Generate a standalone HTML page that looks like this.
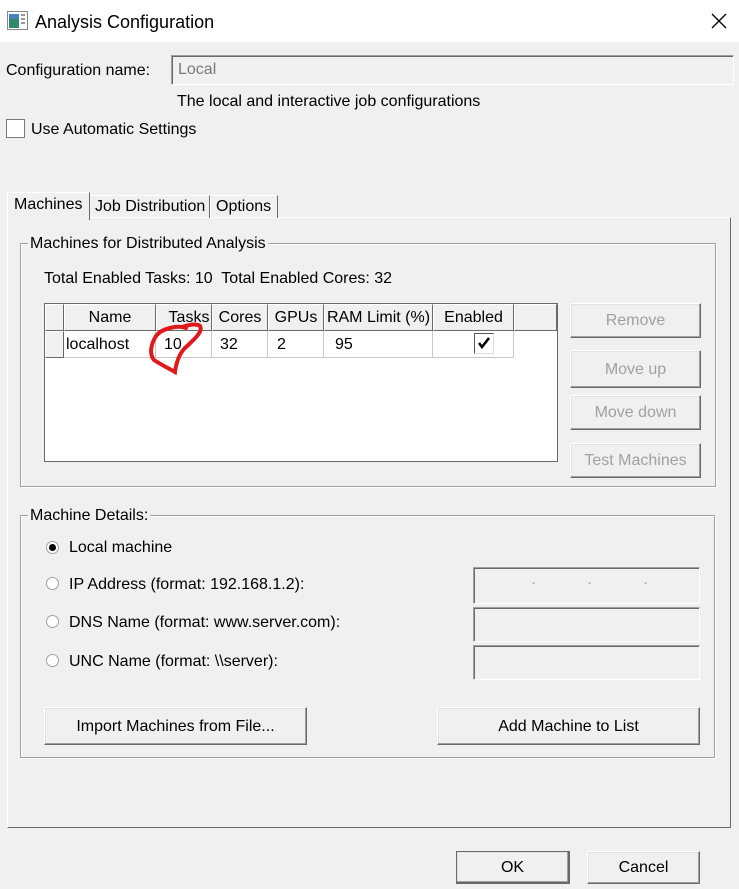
<!DOCTYPE html>
<html><head><style>
*{margin:0;padding:0;box-sizing:border-box}
body{width:739px;height:889px;background:#f0f0f0;font-family:"Liberation Sans",sans-serif;font-size:16px;color:#000;position:relative;overflow:hidden}
.a{position:absolute;white-space:nowrap}
.btn{position:absolute;background:#f0f0f0;border:1px solid;border-color:#fff #696969 #696969 #fff;box-shadow:inset -1px -1px 0 #a0a0a0,inset 1px 1px 0 #e3e3e3;text-align:center;display:flex;align-items:center;justify-content:center;padding-top:1px}
.dis{color:#a0a0a0}
.sunk{position:absolute;border:1px solid;border-color:#a0a0a0 #fff #fff #a0a0a0;box-shadow:inset 1px 1px 0 #696969}
.grp{position:absolute;border:1px solid #a0a0a0;box-shadow:1px 1px 0 #fff inset,1px 1px 0 #fff}
.leg{position:absolute;background:#f0f0f0;padding:0 2px}
.radio{position:absolute;width:13px;height:13px;border-radius:50%;background:#fff;border:1px solid #a0a0a0}
.c{position:absolute;border-right:1px solid #c8c8c8;border-bottom:1px solid #c8c8c8;height:27px;line-height:27px;padding-left:3px}
.h{position:absolute;background:#f0f0f0;border:1px solid;border-color:#fff #696969 #696969 #fff;height:27px;line-height:26px;text-align:center}
</style></head><body>
<div class="a" style="left:0;top:0;width:739px;height:42px;background:#fff"></div>
<svg class="a" style="left:7px;top:11px" width="22" height="20"><rect x="0.5" y="0.5" width="20" height="18" fill="#fff" stroke="#888"/><rect x="2" y="3" width="10" height="14" fill="#2e8a6a"/><rect x="2" y="3" width="10" height="5" fill="#4a7fc0"/><rect x="14" y="3" width="4" height="2" fill="#999"/><rect x="14" y="7" width="4" height="2" fill="#999"/><rect x="14" y="11" width="4" height="2" fill="#999"/></svg>
<div class="a" style="left:35px;top:12px;font-size:18px">Analysis Configuration</div>
<svg class="a" style="left:711px;top:13px" width="16" height="16"><path d="M1 1L15 15M15 1L1 15" stroke="#000" stroke-width="1.3"/></svg>

<div class="a" style="left:6px;top:62px">Configuration name:</div>
<div class="sunk" style="left:171px;top:55px;width:563px;height:30px;background:#f0f0f0"><span class="a" style="left:6px;top:5px;color:#7a7a7a">Local</span></div>
<div class="a" style="left:177px;top:93px">The local and interactive job configurations</div>
<div class="a" style="left:6px;top:119px;width:19px;height:19px;background:#fff;border:1px solid #777"></div>
<div class="a" style="left:31px;top:121px">Use Automatic Settings</div>

<div class="a" style="left:7px;top:217px;width:724px;height:611px;border:1px solid;border-color:#fff #696969 #696969 #fff"></div>
<div class="a" style="left:89px;top:195px;width:121px;height:23px;border:1px solid;border-color:#fff #696969 transparent #fff;border-bottom:none"></div>
<div class="a" style="left:95px;top:198px">Job Distribution</div>
<div class="a" style="left:210px;top:195px;width:68px;height:23px;border:1px solid;border-color:#fff #696969 transparent #fff;border-bottom:none"></div>
<div class="a" style="left:216px;top:198px">Options</div>
<div class="a" style="left:7px;top:192px;width:83px;height:28px;background:#f0f0f0;border:1px solid;border-color:#fff #696969 transparent #fff;border-bottom:none"></div>
<div class="a" style="left:14px;top:196px">Machines</div>

<div class="grp" style="left:20px;top:243px;width:696px;height:244px"></div>
<div class="leg a" style="left:28px;top:235px">Machines for Distributed Analysis</div>
<div class="a" style="left:44px;top:270px">Total Enabled Tasks: 10&nbsp; Total Enabled Cores: 32</div>
<div class="a" style="left:44px;top:303px;width:514px;height:159px;background:#fff;border:1px solid #696969"></div>
<div class="h" style="left:45px;top:304px;width:19px"></div>
<div class="h" style="left:64px;top:304px;width:92px">Name</div>
<div class="h" style="left:156px;top:304px;width:56px;padding-left:10px">Tasks</div>
<div class="h" style="left:212px;top:304px;width:56px">Cores</div>
<div class="h" style="left:268px;top:304px;width:56px">GPUs</div>
<div class="h" style="left:324px;top:304px;width:109px">RAM Limit (%)</div>
<div class="h" style="left:433px;top:304px;width:81px">Enabled</div>
<div class="h" style="left:514px;top:304px;width:43px"></div>
<div class="h" style="left:45px;top:331px;width:19px"></div>
<div class="c" style="left:64px;top:331px;width:92px;padding-left:2px">localhost</div>
<div class="c" style="left:156px;top:331px;width:56px;padding-left:8px">10</div>
<div class="c" style="left:212px;top:331px;width:56px;padding-left:8px">32</div>
<div class="c" style="left:268px;top:331px;width:56px;padding-left:9px">2</div>
<div class="c" style="left:324px;top:331px;width:109px;padding-left:11px">95</div>
<div class="c" style="left:433px;top:331px;width:81px"></div>
<div class="a" style="left:474px;top:333px;width:20px;height:21px;border:1px solid;border-color:#555 #ddd #ddd #555;background:#fff"></div>
<svg class="a" style="left:477px;top:337px" width="14" height="12"><path d="M2 6L5 10L12 1" stroke="#000" stroke-width="2.5" fill="none"/></svg>
<svg class="a" style="left:148px;top:322px" width="62" height="56"><path d="M38 6C30 3 14 6 8 14C3 22 1 32 6 38C12 42 20 46 27 50C28 42 30 34 36 27C43 20 56 10 52 4C48 1 40 3 34 5" stroke="#e0191b" stroke-width="4" fill="none" stroke-linecap="round"/></svg>

<div class="btn dis" style="left:570px;top:303px;width:131px;height:35px">Remove</div>
<div class="btn dis" style="left:570px;top:350px;width:131px;height:38px">Move up</div>
<div class="btn dis" style="left:570px;top:395px;width:131px;height:35px">Move down</div>
<div class="btn dis" style="left:570px;top:443px;width:131px;height:35px">Test Machines</div>

<div class="grp" style="left:20px;top:515px;width:695px;height:243px"></div>
<div class="leg a" style="left:28px;top:507px">Machine Details:</div>
<div class="radio" style="left:46px;top:541px"></div><div class="a" style="left:49px;top:544px;width:7px;height:7px;border-radius:50%;background:#000"></div>
<div class="a" style="left:69px;top:539px">Local machine</div>
<div class="radio" style="left:46px;top:577px"></div><div class="a" style="left:69px;top:576px">IP Address (format: 192.168.1.2):</div>
<div class="radio" style="left:46px;top:615px"></div><div class="a" style="left:69px;top:614px">DNS Name (format: www.server.com):</div>
<div class="radio" style="left:46px;top:654px"></div><div class="a" style="left:69px;top:653px">UNC Name (format: \\server):</div>
<div class="sunk" style="left:473px;top:567px;width:227px;height:37px"><span class="a" style="left:58px;top:10px;color:#888;font-size:10px">-</span><span class="a" style="left:114px;top:10px;color:#888;font-size:10px">-</span><span class="a" style="left:170px;top:10px;color:#888;font-size:10px">-</span></div>
<div class="sunk" style="left:473px;top:607px;width:227px;height:35px"></div>
<div class="sunk" style="left:473px;top:645px;width:227px;height:35px"></div>
<div class="btn" style="left:44px;top:707px;width:263px;height:38px">Import Machines from File...</div>
<div class="btn" style="left:437px;top:707px;width:263px;height:38px">Add Machine to List</div>

<div class="btn" style="left:456px;top:851px;width:114px;height:33px;border-color:#696969;border-width:1px 2px 2px 1px">OK</div>
<div class="btn" style="left:587px;top:851px;width:113px;height:33px">Cancel</div>
</body></html>
